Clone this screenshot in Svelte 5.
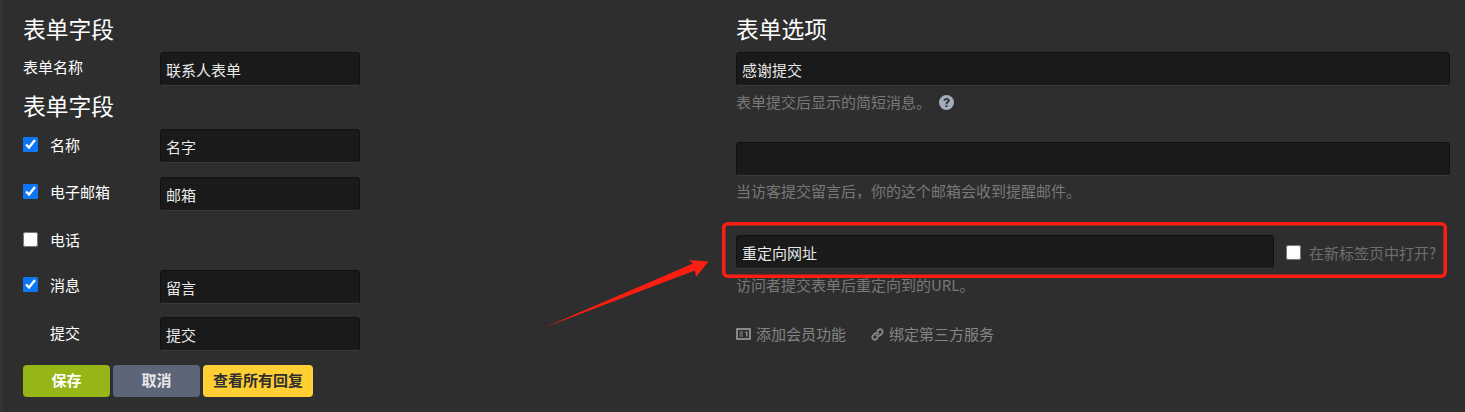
<script>
  const fields = [
    { label: '名称', value: '名字', checked: true, box: true, h: 48, nudge: 1 },
    { label: '电子邮箱', value: '邮箱', checked: true, box: true, h: 48, nudge: 0 },
    { label: '电话', value: null, checked: false, box: true, h: 45, nudge: 0 },
    { label: '消息', value: '留言', checked: true, box: true, h: 47, nudge: 0 },
    { label: '提交', value: '提交', checked: false, box: false, h: 48, nudge: 1 }
  ];
</script>

<div class="page">
  <section class="left">
    <h2 class="first">表单字段</h2>
    <div class="name-row">
      <span class="name-label">表单名称</span>
      <input class="field" value="联系人表单" />
    </div>
    <h2 class="second">表单字段</h2>
    {#each fields as f}
      <div class="row" style="height:{f.h}px">
        <div class="lead" style="margin-top:{f.nudge}px">
          <span class="check">
            {#if f.box}
              <input type="checkbox" checked={f.checked} />
            {/if}
          </span>
          <span class="row-label">{f.label}</span>
        </div>
        {#if f.value}
          <input class="field" value={f.value} />
        {/if}
      </div>
    {/each}
    <div class="buttons">
      <button class="save">保存</button>
      <button class="cancel">取消</button>
      <button class="all">查看所有回复</button>
    </div>
  </section>

  <section class="right">
    <h2 class="first">表单选项</h2>
    <input class="field wide" value="感谢提交" />
    <p class="hint help-line">
      表单提交后显示的简短消息。
      <svg class="help" viewBox="0 0 16 16" width="15" height="15" aria-hidden="true">
        <circle cx="8" cy="8" r="8" fill="#a3adbd" />
        <path d="M4.9 6.1C5 4.3 6.3 3.2 8.2 3.2c1.9 0 3.2 1.1 3.2 2.7 0 1.1-.6 1.8-1.5 2.3-.7.4-.9.7-.9 1.2v.4H7v-.6c0-1 .4-1.6 1.2-2.1.7-.4 1-.7 1-1.2 0-.6-.4-1-1.1-1-.7 0-1.1.4-1.2 1.2z" fill="#2e2e2e" />
        <rect x="6.9" y="10.8" width="2.1" height="2.1" rx=".5" fill="#2e2e2e" />
      </svg>
    </p>
    <input class="field wide second-field" />
    <p class="hint">当访客提交留言后，你的这个邮箱会收到提醒邮件。</p>
    <div class="redirect">
      <input class="field grow" value="重定向网址" />
      <label class="new-tab"><input type="checkbox" /><span>在新标签页中打开?</span></label>
    </div>
    <p class="hint url-hint">访问者提交表单后重定向到的URL。</p>
    <div class="links">
      <span class="link">
        <svg viewBox="0 0 15 12" width="15" height="12" aria-hidden="true">
          <path fill="#8a8a8a" fill-rule="evenodd" d="M1 0h13a1 1 0 0 1 1 1v10a1 1 0 0 1-1 1H1a1 1 0 0 1-1-1V1a1 1 0 0 1 1-1zm1 2v8h11V2z" />
          <path fill="#8a8a8a" d="M3.4 3.4h3.6v1.1H3.4zM3.4 5.4h3.6v1.1H3.4zM3.4 7.4h3.6v1.1H3.4zM8.8 3.4h2.8v1.1H8.8zM10 4.5h1.6v4H10z" />
        </svg>
        添加会员功能
      </span>
      <span class="link">
        <svg viewBox="0 0 16 16" width="13" height="13" aria-hidden="true">
          <g fill="none" stroke="#8a8a8a" stroke-width="2.2" stroke-linecap="round">
            <path d="M6.8 9.2a3 3 0 0 0 4.3 0l2.3-2.3a3 3 0 0 0-4.3-4.3L8 3.7" />
            <path d="M9.2 6.8a3 3 0 0 0-4.3 0L2.6 9.1a3 3 0 0 0 4.3 4.3L8 12.3" />
          </g>
        </svg>
        绑定第三方服务
      </span>
    </div>
  </section>

  <svg class="annotation" width="1465" height="412" viewBox="0 0 1465 412" aria-hidden="true">
    <rect x="723.75" y="223.75" width="721.5" height="52.5" rx="4" fill="none" stroke="#fb1e12" stroke-width="3.5" />
    <path d="M544.5 327.5 L693 263.5 L689 260 L708.5 261.5 L696 277 L695 270.5 Z" fill="#fb1e12" />
  </svg>
</div>

<style>
  :global(body) {
    margin: 0;
    background: #2e2e2e;
  }

  .page {
    position: relative;
    box-sizing: border-box;
    height: 412px;
    width: 1465px;
    display: flex;
    border-left: 3px solid #333;
    padding-left: 20px;
    overflow: hidden;
    font-family: "Noto Sans CJK SC", "Liberation Sans", sans-serif;
    font-size: 15px;
    color: #fff;
  }

  .left {
    width: 337px;
    margin-right: 376px;
    flex: none;
  }

  .right {
    width: 714px;
    flex: none;
  }

  h2 {
    margin: 0;
    font-weight: 400;
    font-size: 22.75px;
    line-height: 30px;
    color: #fff;
  }

  .first {
    padding-top: 14px;
    height: 38px;
  }

  .second {
    height: 30px;
    margin-top: 5px;
    margin-bottom: 8px;
  }

  .field {
    box-sizing: border-box;
    height: 34px;
    padding: 0 5px;
    border: 1px solid #111;
    border-bottom-color: #3a3a3a;
    border-radius: 4px;
    background: #1a1a1a;
    color: #e8e8e8;
    font: inherit;
    outline: none;
  }

  .left .field {
    width: 200px;
    margin-left: auto;
  }

  .name-row {
    display: flex;
    align-items: flex-start;
    height: 34px;
  }

  .name-label {
    line-height: 30px;
  }

  .row {
    display: flex;
    align-items: flex-start;
  }

  .lead {
    display: flex;
    align-items: flex-start;
  }

  .check {
    width: 27px;
    height: 20px;
    flex: none;
    padding-top: 7px;
  }

  input[type="checkbox"] {
    display: block;
    width: 15px;
    height: 15px;
    margin: 0;
    accent-color: #0b76f7;
  }

  .row-label {
    line-height: 30px;
    color: #fff;
  }

  .buttons {
    display: flex;
    gap: 3px;
  }

  button {
    height: 32px;
    border: 0;
    border-radius: 4px;
    font: inherit;
    font-weight: 700;
    padding: 0 0 3px;
  }

  .save {
    width: 87px;
    background: #96b517;
    color: #fff;
  }

  .cancel {
    width: 87px;
    background: #5d6678;
    color: #e8e8e8;
  }

  .all {
    width: 110px;
    background: #ffcf33;
    color: #2f2f2f;
  }

  .wide {
    display: block;
    width: 100%;
  }

  .hint {
    margin: 0;
    color: #787878;
    line-height: 20px;
  }

  .help-line {
    display: flex;
    align-items: center;
    gap: 8px;
    height: 20px;
    margin-top: 6px;
  }

  .second-field {
    margin-top: 30px;
  }

  .second-field + .hint {
    margin-top: 5px;
  }

  .redirect {
    display: flex;
    align-items: center;
    margin-top: 34px;
    height: 34px;
  }

  .grow {
    width: 538px;
    flex: none;
  }

  .new-tab {
    display: flex;
    align-items: center;
    gap: 8px;
    margin-left: 12px;
    color: #6f6f6f;
    white-space: nowrap;
  }

  .url-hint {
    margin-top: 6px;
  }

  .links {
    display: flex;
    gap: 25px;
    margin-top: 29px;
    color: #858585;
    line-height: 20px;
  }

  .link {
    display: flex;
    align-items: center;
    gap: 5px;
  }

  .annotation {
    position: absolute;
    left: -3px;
    top: 0;
    pointer-events: none;
  }
</style>
